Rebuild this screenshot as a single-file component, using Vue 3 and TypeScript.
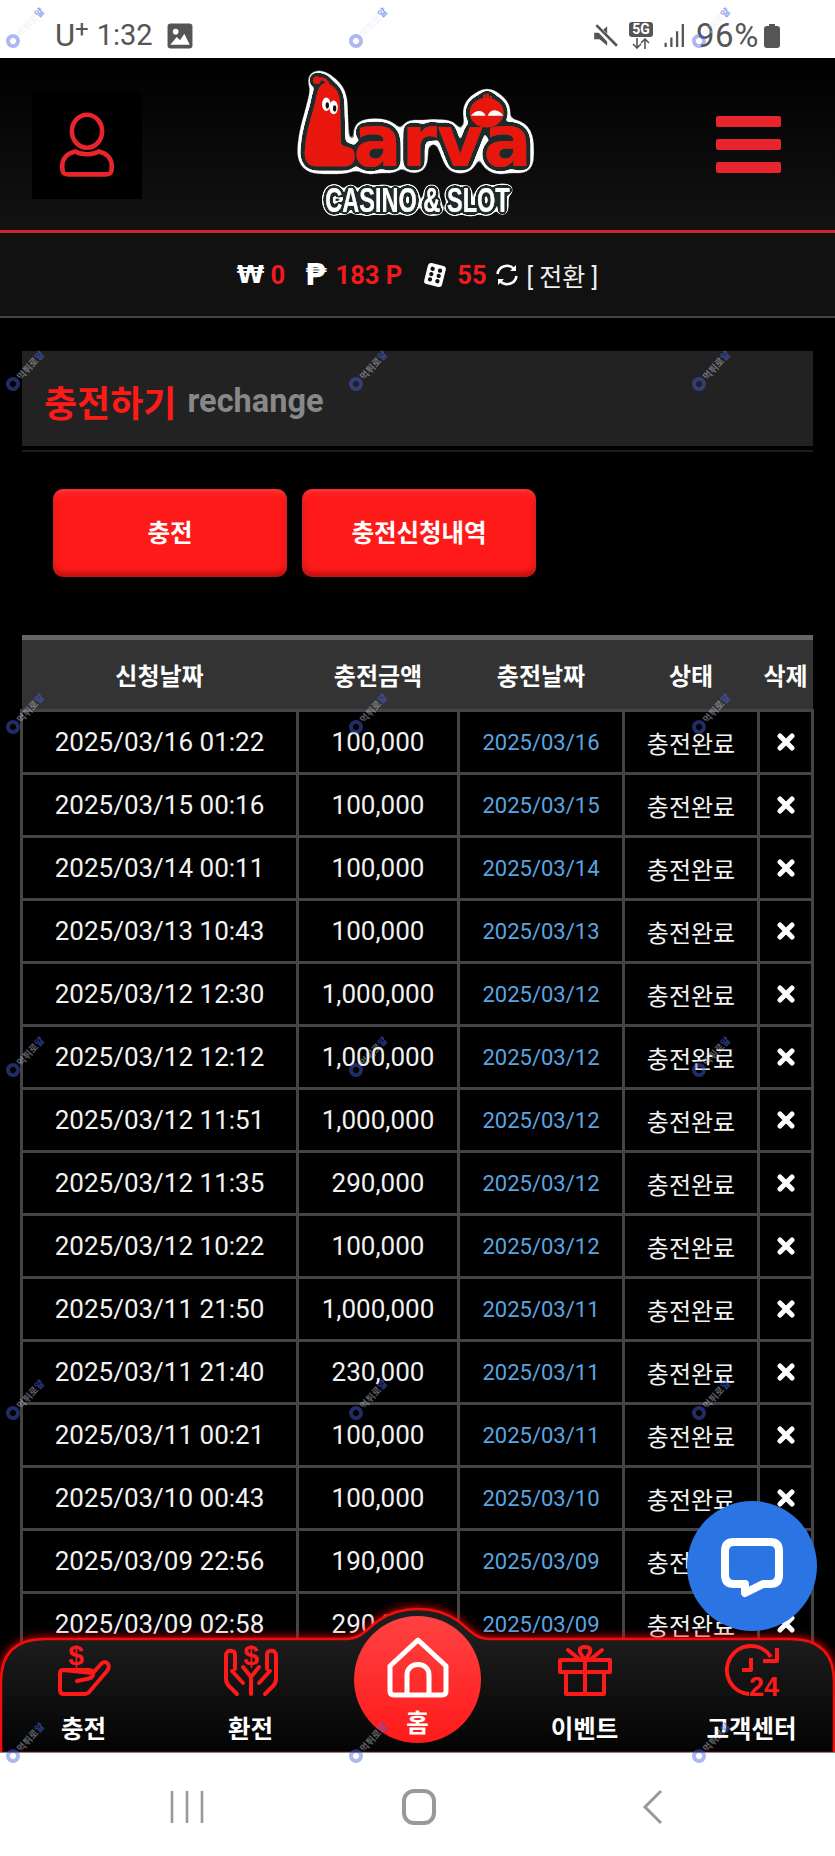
<script setup lang="ts">
interface Deposit {
  requested: string
  amount: string
  paid: string
}

const deposits: Deposit[] = [
  { requested: '2025/03/16 01:22', amount: '100,000', paid: '2025/03/16' },
  { requested: '2025/03/15 00:16', amount: '100,000', paid: '2025/03/15' },
  { requested: '2025/03/14 00:11', amount: '100,000', paid: '2025/03/14' },
  { requested: '2025/03/13 10:43', amount: '100,000', paid: '2025/03/13' },
  { requested: '2025/03/12 12:30', amount: '1,000,000', paid: '2025/03/12' },
  { requested: '2025/03/12 12:12', amount: '1,000,000', paid: '2025/03/12' },
  { requested: '2025/03/12 11:51', amount: '1,000,000', paid: '2025/03/12' },
  { requested: '2025/03/12 11:35', amount: '290,000', paid: '2025/03/12' },
  { requested: '2025/03/12 10:22', amount: '100,000', paid: '2025/03/12' },
  { requested: '2025/03/11 21:50', amount: '1,000,000', paid: '2025/03/11' },
  { requested: '2025/03/11 21:40', amount: '230,000', paid: '2025/03/11' },
  { requested: '2025/03/11 00:21', amount: '100,000', paid: '2025/03/11' },
  { requested: '2025/03/10 00:43', amount: '100,000', paid: '2025/03/10' },
  { requested: '2025/03/09 22:56', amount: '190,000', paid: '2025/03/09' },
  { requested: '2025/03/09 02:58', amount: '290,000', paid: '2025/03/09' },
]

// 3 x 6 tile of the screenshot watermark
const watermarks = Array.from({ length: 18 }, (_, i) => i)
</script>

<template>
  <div class="phone">
    <div class="status">
      <div class="status__side">
        <span class="carrier">U<sup>+</sup></span>
        <span class="clock">1:32</span>
        <svg class="status__pic" viewBox="0 0 24 24" width="26" height="26">
          <rect x="0.5" y="0.5" width="23" height="23" rx="3" fill="#555" />
          <circle cx="8" cy="8" r="2.6" fill="#fff" />
          <path d="M3 20 L9 13 L12 16 L16 10 L21 20 Z" fill="#fff" />
        </svg>
      </div>
      <div class="status__side status__side--right">
        <svg viewBox="0 0 24 24" width="26" height="26">
          <path d="M2 9 H7 L14 3 V21 L7 15 H2 Z" fill="#555" />
          <path d="M3 2 L23 23" stroke="#fff" stroke-width="5" />
          <path d="M4 2 L23 21" stroke="#555" stroke-width="2.4" />
        </svg>
        <div class="net">
          <span class="net__badge">5G</span>
          <svg viewBox="0 0 24 11" width="24" height="11">
            <path d="M8 0 V10 M4 6 L8 10 L12 6 M16 11 V1 M12 5 L16 1 L20 5" fill="none" stroke="#555" stroke-width="1.6" />
          </svg>
        </div>
        <svg viewBox="0 0 20 24" width="21" height="25">
          <path d="M1.5 19 V23 M7 14 V23 M12.5 8 V23 M18 1 V23" stroke="#555" stroke-width="2.2" />
        </svg>
        <span class="percent">96%</span>
        <svg viewBox="0 0 16 24" width="16" height="24">
          <path d="M5 0 H11 V2 H13 Q16 2 16 5 V21 Q16 24 13 24 H3 Q0 24 0 21 V5 Q0 2 3 2 H5 Z" fill="#555" />
        </svg>
      </div>
    </div>

    <div class="screen">
      <header class="top">
        <div class="top__user">
          <svg viewBox="0 0 60 72" width="60" height="66" fill="none" stroke="#e8242d" stroke-width="5">
            <ellipse cx="30" cy="21" rx="16.5" ry="18" />
            <path d="M17 43 C8 45 3 51 3 59 C3 66 4 68 9 68 H51 C56 68 57 66 57 59 C57 51 52 45 43 43 C36 47 24 47 17 43 Z" />
          </svg>
        </div>

        <svg class="logo" viewBox="0 0 255 165" width="268" height="173">
          <defs>
            <filter id="lv-outline" x="-15%" y="-15%" width="130%" height="130%">
              <feGaussianBlur in="SourceAlpha" stdDeviation="5.5" />
              <feComponentTransfer result="wide"><feFuncA type="linear" slope="30" intercept="-2" /></feComponentTransfer>
              <feFlood flood-color="#fff" />
              <feComposite in2="wide" operator="in" result="white" />
              <feGaussianBlur in="SourceAlpha" stdDeviation="3" />
              <feComponentTransfer result="narrow"><feFuncA type="linear" slope="30" intercept="-2" /></feComponentTransfer>
              <feFlood flood-color="#1b2a2c" />
              <feComposite in2="narrow" operator="in" result="dark" />
              <feMerge>
                <feMergeNode in="white" />
                <feMergeNode in="dark" />
                <feMergeNode in="SourceGraphic" />
              </feMerge>
            </filter>
            <filter id="lv-outline-sm" x="-10%" y="-30%" width="120%" height="160%">
              <feGaussianBlur in="SourceAlpha" stdDeviation="3.2" />
              <feComponentTransfer result="wide"><feFuncA type="linear" slope="30" intercept="-2" /></feComponentTransfer>
              <feFlood flood-color="#fff" />
              <feComposite in2="wide" operator="in" result="white" />
              <feGaussianBlur in="SourceAlpha" stdDeviation="2.1" />
              <feComponentTransfer result="narrow"><feFuncA type="linear" slope="30" intercept="-2" /></feComponentTransfer>
              <feFlood flood-color="#1b2a2c" />
              <feComposite in2="narrow" operator="in" result="dark" />
              <feMerge>
                <feMergeNode in="white" />
                <feMergeNode in="dark" />
                <feMergeNode in="SourceGraphic" />
              </feMerge>
            </filter>
          </defs>
          <g filter="url(#lv-outline)">
            <path
              d="M40 27 C48 29 53 36 53 46 L54 84 C56 89 63 87 66 91 C69 100 65 106 58 106 L30 106 C22 106 18 99 20 88 C21 70 28 55 31 38 C32 33 35 26 40 27 Z"
              fill="#e8190a"
            />
            <path d="M32 24 C36 21 41 24 42 29" fill="none" stroke="#e8190a" stroke-width="2.5" />
            <circle cx="31" cy="24" r="3.5" fill="#e8190a" />
            <ellipse cx="193" cy="55" rx="16" ry="14" fill="#e8190a" />
            <path d="M191 44 V38 M194 44 V37 M197 44 V39" stroke="#e8190a" stroke-width="2" />
            <text class="logo__word" x="66" y="106" textLength="170" lengthAdjust="spacingAndGlyphs">arva</text>
          </g>
          <ellipse cx="40" cy="47" rx="4" ry="6.5" fill="#fff" />
          <ellipse cx="47" cy="50" rx="4" ry="6.5" fill="#fff" />
          <ellipse cx="41" cy="48" rx="1.6" ry="3" fill="#111" />
          <ellipse cx="48" cy="51" rx="1.6" ry="3" fill="#111" />
          <path d="M178 58 C182 52 190 52 192 58 Z M194 58 C197 50 205 52 209 58 Z" fill="#fff" />
          <g filter="url(#lv-outline-sm)">
            <text class="logo__tag" x="127" y="150" text-anchor="middle" textLength="176" lengthAdjust="spacingAndGlyphs">CASINO &amp; SLOT</text>
          </g>
        </svg>

        <div class="top__menu">
          <span /><span /><span />
        </div>
      </header>

      <div class="wallet">
        <span class="wallet__sym">₩</span>
        <b class="wallet__val wallet__val--first">0</b>
        <span class="wallet__sym wallet__sym--gap">₱</span>
        <b class="wallet__val">183 P</b>
        <svg class="wallet__dice" viewBox="0 0 24 24" width="26" height="26">
          <rect x="3.5" y="2" width="17" height="20" rx="3" fill="#fff" transform="rotate(14 12 12)" />
          <g fill="#111" transform="rotate(14 12 12)">
            <circle cx="8.5" cy="7" r="2" /><circle cx="15.5" cy="7" r="2" />
            <circle cx="8.5" cy="12" r="2" /><circle cx="15.5" cy="12" r="2" />
            <circle cx="8.5" cy="17" r="2" /><circle cx="15.5" cy="17" r="2" />
          </g>
        </svg>
        <b class="wallet__val">55</b>
        <svg class="wallet__sync" viewBox="0 0 24 24" width="24" height="24" fill="none" stroke="#fff" stroke-width="2.6">
          <path d="M2.5 11 A9.5 9.5 0 0 1 19 6" />
          <path d="M21.5 13 A9.5 9.5 0 0 1 5 18" />
          <path d="M21 2 V8 H15 Z M3 22 V16 H9 Z" fill="#fff" stroke="none" />
        </svg>
        <span class="wallet__swap">[ 전환 ]</span>
      </div>

      <section class="title">
        <h1 class="title__box"><span class="title__ko">충전하기</span> <span class="title__en">rechange</span></h1>
        <div class="title__rule" />
      </section>

      <div class="actions">
        <button class="actions__btn" type="button">충전</button>
        <button class="actions__btn" type="button">충전신청내역</button>
      </div>

      <table class="history">
        <colgroup>
          <col class="history__c1" /><col class="history__c2" /><col class="history__c3" /><col class="history__c4" /><col class="history__c5" />
        </colgroup>
        <thead>
          <tr>
            <th>신청날짜</th>
            <th>충전금액</th>
            <th>충전날짜</th>
            <th>상태</th>
            <th>삭제</th>
          </tr>
        </thead>
        <tbody>
          <tr v-for="row in deposits" :key="row.requested">
            <td>{{ row.requested }}</td>
            <td>{{ row.amount }}</td>
            <td class="history__paid">{{ row.paid }}</td>
            <td class="history__state">충전완료</td>
            <td>
              <svg class="history__del" viewBox="0 0 18 18" width="18" height="18">
                <path d="M3 3 L15 15 M15 3 L3 15" stroke="#fff" stroke-width="5" stroke-linecap="round" />
              </svg>
            </td>
          </tr>
        </tbody>
      </table>

      <div class="chat">
        <svg viewBox="0 0 130 130" width="130" height="130" fill="none">
          <path
            d="M47 41 H83 Q92 41 92 50 V74 Q92 83 83 83 H76 L58 92 V83 H47 Q38 83 38 74 V50 Q38 41 47 41 Z"
            stroke="#fff"
            stroke-width="8"
            stroke-linejoin="round"
          />
        </svg>
      </div>

      <nav class="dock">
        <svg class="dock__bg" viewBox="0 0 835 145" width="835" height="145">
          <defs>
            <linearGradient id="dock-fill" x1="0" y1="0" x2="0" y2="1">
              <stop offset="0.2" stop-color="#1d1d1d" />
              <stop offset="1" stop-color="#030303" />
            </linearGradient>
          </defs>
          <path
            d="M1 146 V75 Q1 32 45 32 H345 C362 32 368 21 378 14 C392 4 405 2 418 2 C431 2 444 4 458 14 C468 21 474 32 490 32 H790 Q834 32 834 75 V146 Z"
            fill="url(#dock-fill)"
            stroke="#f30d0d"
            stroke-width="2.5"
          />
        </svg>

        <a class="dock__item">
          <svg viewBox="0 0 54 52" width="54" height="52" fill="none" stroke="#ff1a1a" stroke-width="4" stroke-linejoin="round" stroke-linecap="round">
            <path d="M6 25 H32 Q37 25 36 30 Q35 33 30 34 L20 36 M36 28 L44 19 Q48 15 51 19 Q53 22 50 26 L33 46 Q31 49 27 49 H7 Q3 49 3 45 V28 Q3 25 6 25 Z" />
            <text class="dock__glyph" x="19" y="20" text-anchor="middle">$</text>
          </svg>
          <span>충전</span>
        </a>
        <a class="dock__item">
          <svg viewBox="0 0 54 52" width="54" height="52" fill="none" stroke="#ff1a1a" stroke-width="4" stroke-linejoin="round" stroke-linecap="round">
            <path d="M8 6 Q2 5 2 11 V34 Q2 38 5 41 L13 49 M8 6 Q11 6 11 10 V24 M8 26 L19 38" />
            <path d="M46 6 Q52 5 52 11 V34 Q52 38 49 41 L41 49 M46 6 Q43 6 43 10 V24 M46 26 L35 38" />
            <path d="M19 22 L27 32 L35 22 M27 32 V49" />
            <text class="dock__glyph" x="27" y="20" text-anchor="middle">$</text>
          </svg>
          <span>환전</span>
        </a>
        <a class="dock__item dock__item--home">
          <svg viewBox="0 0 62 60" width="62" height="60" fill="none" stroke="#fff" stroke-width="5" stroke-linejoin="round">
            <path d="M31 3 L59 29 V54 Q59 58 55 58 H7 Q3 58 3 54 V29 Z" />
            <path d="M20 58 V38 C20 24 42 24 42 38 V58" />
          </svg>
          <span>홈</span>
        </a>
        <a class="dock__item">
          <svg viewBox="0 0 54 52" width="54" height="52" fill="none" stroke="#ff1a1a" stroke-width="4" stroke-linejoin="round" stroke-linecap="round">
            <path d="M2 15 H52 V27 H2 Z M8 27 V49 H46 V27 M27 15 V49" />
            <path d="M27 15 C19 5 21 2 27 2 C33 2 35 5 27 15 Z M10 5 L21 14 M44 5 L33 14" />
          </svg>
          <span>이벤트</span>
        </a>
        <a class="dock__item">
          <svg viewBox="0 0 54 52" width="54" height="52" fill="none" stroke="#ff1a1a" stroke-width="4" stroke-linejoin="round">
            <path d="M24 49 A24 24 0 1 1 46 12" />
            <path d="M52 3 V16 H38" />
            <path d="M26 13 V25 H17" />
            <text class="dock__num" x="39" y="51" text-anchor="middle" textLength="30" lengthAdjust="spacingAndGlyphs">24</text>
          </svg>
          <span>고객센터</span>
        </a>
      </nav>
    </div>

    <div class="softkeys">
      <svg viewBox="0 0 34 34" width="34" height="34" fill="none" stroke="#999" stroke-width="2.6">
        <path d="M2 1 V33 M17 1 V33 M32 1 V33" />
      </svg>
      <svg viewBox="0 0 36 36" width="36" height="36" fill="none" stroke="#999" stroke-width="4">
        <rect x="3" y="2" width="30" height="32" rx="10" />
      </svg>
      <svg viewBox="0 0 22 36" width="22" height="36" fill="none" stroke="#999" stroke-width="3">
        <path d="M19 2 L3 18 L19 34" />
      </svg>
    </div>

    <div class="marks" aria-hidden="true">
      <div v-for="n in watermarks" :key="n" class="marks__one">
        <i class="marks__dot" />
        <span class="marks__txt">먹튀로<em>얄</em></span>
      </div>
    </div>
  </div>
</template>

<style>
html,
body {
  background: #000;
  overflow: hidden;
}
</style>

<style scoped>
.phone {
  position: relative;
  display: flex;
  flex-direction: column;
  width: 835px;
  height: 1856px;
  overflow: hidden;
  background: #000;
  font-family: Roboto, "Noto Sans CJK KR", sans-serif;
  color: #fff;
}

/* android chrome */
.status {
  flex: none;
  display: flex;
  justify-content: space-between;
  align-items: center;
  height: 58px;
  padding: 13px 55px 0;
  box-sizing: border-box;
  background: #fff;
  color: #555;
}
.status__side {
  display: flex;
  align-items: center;
  gap: 12px;
}
.status__side--right {
  gap: 11px;
}
.carrier {
  font-size: 31px;
  line-height: 1;
}
.carrier sup {
  font-size: 24px;
  line-height: 0;
  vertical-align: 9px;
}
.clock {
  margin-left: -4px;
  font-size: 29px;
  line-height: 1;
}
.status__pic {
  margin-left: 2px;
}
.net {
  display: flex;
  flex-direction: column;
  align-items: center;
  gap: 1px;
}
.net__badge {
  padding: 0 3px;
  border-radius: 3px;
  background: #555;
  color: #fff;
  font-size: 14px;
  font-weight: 700;
  line-height: 15px;
}
.percent {
  font-size: 33px;
  letter-spacing: 0.6px;
  line-height: 1;
  margin-right: -6px;
}

.screen {
  position: relative;
  flex: 1;
  min-height: 0;
  overflow: hidden;
}

/* header */
.top {
  display: grid;
  grid-template-columns: 1fr auto 1fr;
  align-items: center;
  height: 172px;
  padding: 0 54px;
  border-bottom: 3px solid #c9262b;
  background: linear-gradient(#000, #121212);
}
.top__user {
  justify-self: start;
  display: flex;
  align-items: center;
  justify-content: center;
  width: 110px;
  height: 107px;
  margin: 2px 0 0 -22px;
  background: #000;
}
.logo {
  margin-top: -6px;
  overflow: visible;
}
.logo__word {
  font-family: "DejaVu Sans", sans-serif;
  font-size: 68px;
  font-weight: 700;
  fill: #e8190a;
}
.logo__tag {
  font-family: "Liberation Sans", sans-serif;
  font-size: 33px;
  font-weight: 700;
  fill: #fff;
}
.top__menu {
  justify-self: end;
  display: flex;
  flex-direction: column;
  gap: 12px;
  width: 65px;
}
.top__menu span {
  height: 11px;
  border-radius: 2px;
  background: #e8242d;
}

/* balances */
.wallet {
  display: flex;
  align-items: center;
  justify-content: center;
  height: 85px;
  border-bottom: 2px solid #444;
  background: #111;
  box-sizing: border-box;
}
.wallet__sym {
  font-family: "DejaVu Sans", sans-serif;
  font-size: 25px;
  font-weight: 700;
  color: #fff;
}
.wallet__sym--gap {
  margin-left: 20px;
  font-size: 31px;
  line-height: 1;
}
.wallet__val {
  margin-left: 9px;
  font-size: 25.5px;
  font-weight: 700;
  color: #f01c1c;
}
.wallet__val--first {
  margin-left: 6px;
}
.wallet__dice {
  margin-left: 20px;
}
.wallet__sync {
  margin-left: 8px;
}
.wallet__swap {
  margin-left: 8px;
  font-size: 25px;
  color: #eee;
}

/* page title */
.title {
  margin: 33px 22px 0;
}
.title__box {
  display: flex;
  align-items: center;
  gap: 11px;
  height: 95px;
  margin: 0;
  padding: 4px 22px 0;
  box-sizing: border-box;
  background: #222;
  font-weight: 700;
}
.title__ko {
  font-size: 36px;
  color: #ff1a1a;
}
.title__en {
  font-size: 32.5px;
  color: #888;
}
.title__rule {
  height: 2px;
  margin-top: 4px;
  background: #1c1c1c;
}

.actions {
  display: flex;
  gap: 15px;
  margin: 37px 0 0 53px;
}
.actions__btn {
  width: 234px;
  height: 88px;
  padding: 0 0 4px;
  border: 0;
  border-radius: 10px;
  background: #ff1a1a;
  box-shadow: inset 0 -4px 6px rgba(90, 0, 0, 0.45), inset 0 3px 5px rgba(255, 120, 120, 0.35);
  color: #fff;
  font-family: "Noto Sans CJK KR", sans-serif;
  font-size: 24.5px;
  font-weight: 700;
}

/* history table */
.history {
  width: 791px;
  margin: 58px 0 0 20px;
  border-collapse: collapse;
  table-layout: fixed;
}
.history__c1 { width: 276px; }
.history__c2 { width: 161px; }
.history__c3 { width: 165px; }
.history__c4 { width: 135px; }
.history__c5 { width: 54px; }
.history th {
  height: 69px;
  padding: 0;
  border-top: 5px solid #666;
  background: #333;
  font-family: "Noto Sans CJK KR", sans-serif;
  font-size: 24px;
  font-weight: 700;
}
.history td {
  height: 60px;
  padding: 0;
  border: 3px solid #444;
  background: #000;
  color: #f2f2f2;
  font-size: 26px;
  text-align: center;
}
.history .history__paid {
  color: #5aa5e0;
  font-size: 22px;
}
.history .history__state {
  font-family: "Noto Sans CJK KR", sans-serif;
  font-size: 24px;
}
.history__del {
  display: block;
  margin: 0 auto;
}

/* overlays */
.chat {
  position: absolute;
  right: 18px;
  bottom: 121px;
  z-index: 3;
  width: 130px;
  height: 130px;
  border-radius: 50%;
  background: #2a74e4;
}
.dock {
  position: absolute;
  left: 0;
  right: 0;
  bottom: 0;
  z-index: 2;
  display: grid;
  grid-template-columns: repeat(5, 1fr);
  height: 145px;
}
.dock__bg {
  position: absolute;
  inset: 0;
  overflow: visible;
  filter: drop-shadow(0 0 5px #f00);
}
.dock__item {
  position: relative;
  display: flex;
  flex-direction: column;
  align-items: center;
  padding-top: 38px;
  color: #fff;
  font-family: "Noto Sans CJK KR", sans-serif;
  font-size: 24.5px;
  font-weight: 700;
  line-height: 32px;
}
.dock__item svg {
  overflow: visible;
}
.dock__item span {
  margin-top: 15px;
}
.dock__item--home {
  justify-self: center;
  box-sizing: border-box;
  width: 127px;
  height: 127px;
  margin-top: 9px;
  padding-top: 21px;
  border-radius: 50%;
  background: linear-gradient(#ff4242, #ff1a1a);
}
.dock__item--home span {
  margin-top: 9px;
}
.dock__glyph {
  font-family: "Liberation Sans", sans-serif;
  font-size: 28px;
  font-weight: 700;
  fill: #ff1a1a;
  stroke: none;
}
.dock__num {
  font-family: "Liberation Sans", sans-serif;
  font-size: 27px;
  font-weight: 700;
  fill: #ff1a1a;
  stroke: none;
}

.softkeys {
  flex: none;
  display: grid;
  grid-template-columns: repeat(3, 1fr);
  justify-items: center;
  align-items: center;
  height: 104px;
  padding: 4px 0 0;
  background: #fff;
  box-sizing: border-box;
  border-top: 1px solid #888;
}
.softkeys svg:nth-child(1) { margin-left: 95px; }
.softkeys svg:nth-child(2) { margin-left: 4px; }
.softkeys svg:nth-child(3) { margin-right: 85px; }

/* screenshot watermark, sits over everything */
.marks {
  position: absolute;
  inset: 0;
  z-index: 5;
  display: grid;
  grid-template-columns: repeat(3, 343px);
  grid-auto-rows: 343px;
  padding: 32px 0 0 6px;
  pointer-events: none;
}
.marks__one {
  display: flex;
  align-items: center;
  gap: 1px;
  height: 18px;
  transform: rotate(-48deg);
  transform-origin: 7px 9px;
}
.marks__dot {
  flex: none;
  box-sizing: border-box;
  width: 14px;
  height: 14px;
  border: 4px solid rgba(70, 100, 225, 0.45);
  border-radius: 50%;
}
.marks__txt {
  font-family: "Noto Sans CJK KR", sans-serif;
  font-size: 9.5px;
  line-height: 14px;
  font-weight: 700;
  color: rgba(225, 230, 245, 0.42);
}
.marks__txt em {
  font-style: normal;
  color: rgba(70, 100, 225, 0.6);
}
</style>
